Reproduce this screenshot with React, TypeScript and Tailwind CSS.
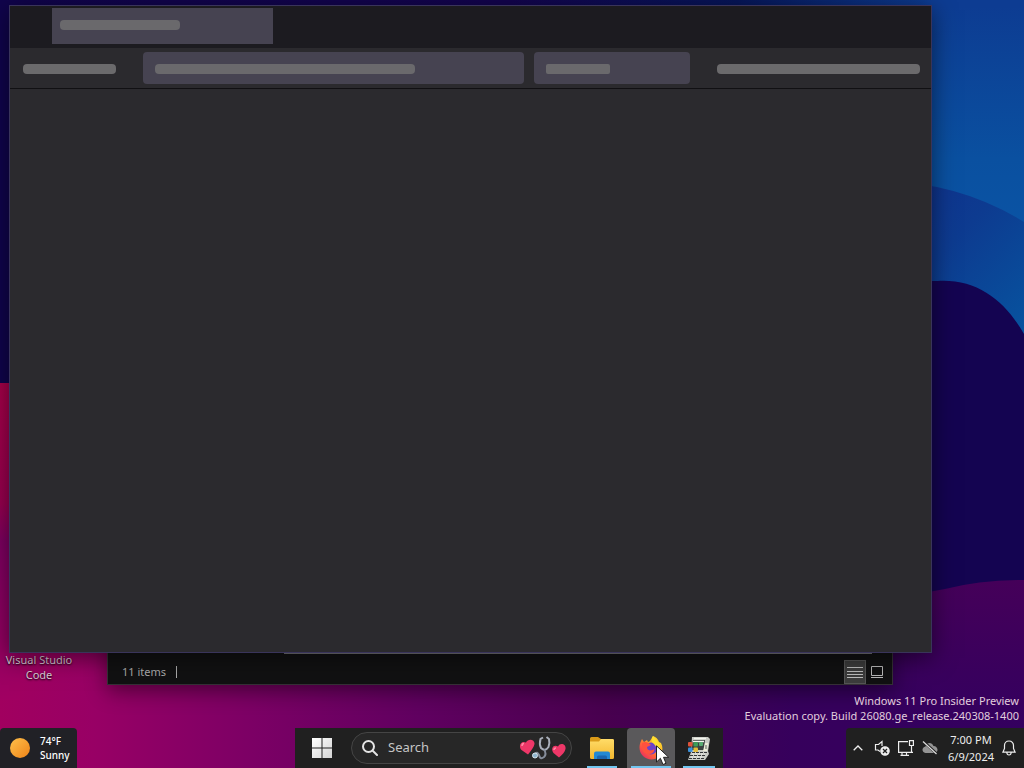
import React from 'react';

function Wallpaper() {
  return (
    <svg className="absolute inset-0 h-full w-full" viewBox="0 0 1024 768" preserveAspectRatio="none" aria-hidden="true">
      <defs>
        <linearGradient id="sky" x1="0" y1="0" x2="1" y2="0">
          <stop offset="0" stopColor="#10044c" />
          <stop offset="0.5" stopColor="#13044f" />
          <stop offset="0.72" stopColor="#06165a" />
          <stop offset="0.91" stopColor="#0d3c92" />
          <stop offset="1" stopColor="#0d3c92" />
        </linearGradient>
        <linearGradient id="skyRight" x1="0" y1="0" x2="0" y2="1">
          <stop offset="0" stopColor="#0d3c92" />
          <stop offset="0.45" stopColor="#0a50a0" />
          <stop offset="1" stopColor="#0a59ab" />
        </linearGradient>
        <linearGradient id="wave" x1="0" y1="0" x2="0.8" y2="1">
          <stop offset="0" stopColor="#102f8b" />
          <stop offset="0.45" stopColor="#0d3b90" />
          <stop offset="1" stopColor="#07539f" />
        </linearGradient>
        <linearGradient id="ground" x1="0" y1="0" x2="1" y2="0">
          <stop offset="0" stopColor="#a1005f" />
          <stop offset="0.1" stopColor="#980065" />
          <stop offset="0.27" stopColor="#7c0065" />
          <stop offset="0.45" stopColor="#600060" />
          <stop offset="0.65" stopColor="#48004f" />
          <stop offset="0.85" stopColor="#36005c" />
          <stop offset="1" stopColor="#36005f" />
        </linearGradient>
        <linearGradient id="hill" x1="0" y1="0" x2="0" y2="1">
          <stop offset="0" stopColor="#450059" />
          <stop offset="0.5" stopColor="#39005d" />
          <stop offset="1" stopColor="#300060" />
        </linearGradient>
        <linearGradient id="edge" x1="0" y1="0" x2="0" y2="1">
          <stop offset="0" stopColor="#a8004a" />
          <stop offset="0.38" stopColor="#990050" />
          <stop offset="0.5" stopColor="#7e0062" />
          <stop offset="1" stopColor="#a10062" />
        </linearGradient>
      </defs>
      <rect width="1024" height="768" fill="url(#sky)" />
      <rect x="932" y="6" width="92" height="340" fill="url(#skyRight)" />
      <path d="M880 181 Q960 182 1024 222 V360 H880Z" fill="url(#wave)" />
      <path d="M880 281 H938 C978 279 1005 301 1024 334 V620 H880Z" fill="#140451" />
      <path d="M0 383 H20 V610 H932 V768 H0Z" fill="url(#ground)" />
      <path d="M0 383 H20 V700 H0Z" fill="url(#edge)" />
      <path d="M860 600 Q905 597 945 589 Q980 580 1024 580 V768 H860Z" fill="url(#hill)" />
    </svg>
  );
}

function FileExplorer() {
  return (
    <section
      aria-label="File Explorer"
      className="absolute top-[120px] right-[131px] bottom-[83px] left-[107px] flex flex-col border border-[#353036] bg-[#111112] shadow-[0_6px_20px_rgba(0,0,0,0.45)]"
    >
      <div className="flex-1" />
      <div className="mr-5 ml-44 h-px bg-[#77777c]" />
      <footer className="flex h-[30px] items-center pt-1.5 pr-1 text-[11px] text-[#aaaaaa]">
        <span className="ml-3.5">11 items</span>
        <span className="ml-2.5 h-3 w-px bg-[#aaaaaa]" />
        <button type="button" aria-label="Details view" className="ml-auto flex h-6 w-[22px] items-center justify-center border border-[#555] bg-[#3c3c3c]">
          <svg width="16" height="12" viewBox="0 0 16 12" stroke="#bcbcbc" aria-hidden="true">
            <path d="M0 1.5H16M0 5.5H16M0 8.5H16M0 11.5H16" />
          </svg>
        </button>
        <button type="button" aria-label="Large icons view" className="flex h-6 w-[22px] items-center justify-center">
          <svg width="12" height="12" viewBox="0 0 12 12" fill="none" stroke="#b8b8b8" aria-hidden="true">
            <path d="M.5 .5H11.5V9.5H.5ZM0 11.5H12" />
          </svg>
        </button>
      </footer>
    </section>
  );
}

function BrowserWindow() {
  return (
    <section
      aria-label="Firefox"
      aria-busy="true"
      className="absolute top-[5px] right-[92px] bottom-[115px] left-[9px] flex flex-col border border-[#39345a] bg-[#2b2a2e] shadow-[0_5px_22px_rgba(0,0,0,0.5)]"
    >
      <div className="flex h-[42px] shrink-0 bg-[#1c1b20] pt-0.5 pb-1 pl-[42px]">
        <div className="flex w-[221px] items-center bg-[#464351] px-2 pb-0.5">
          <div className="h-2.5 w-[120px] rounded bg-[#6a696c]" />
        </div>
      </div>
      <div className="flex h-[41px] shrink-0 items-center border-b border-[#111013] bg-[#2b2a2e] pr-[11px] pl-[13px]">
        <div className="flex h-8 items-center pt-0.5">
          <div className="h-2.5 w-[93px] rounded bg-[#6b6a6c]" />
        </div>
        <div className="ml-[27px] flex h-8 flex-1 items-center rounded bg-[#464351] px-3 pt-0.5">
          <div className="h-2.5 w-[260px] rounded bg-[#6a696c]" />
        </div>
        <div className="ml-2.5 flex h-8 w-[156px] items-center rounded bg-[#464351] px-3 pt-0.5">
          <div className="h-2.5 w-16 rounded-xs bg-[#6a696c]" />
        </div>
        <div className="ml-[27px] flex h-8 items-center pt-0.5">
          <div className="h-2.5 w-[203px] rounded bg-[#6b6a6c]" />
        </div>
      </div>
      <div className="flex-1" />
    </section>
  );
}

function HealthDoodle() {
  return (
    <svg width="48" height="26" viewBox="0 0 48 26" fill="none" aria-hidden="true">
      <path d="M9 19.500 2.500 15C-1 11 2 5 7 7.500 9 3 16 4 15.500 9 15 12 12 16 9 19.500Z" fill="#ee3768" />
      <path d="M3 11Q3 8.500 5 8.500" stroke="#ff8aa5" strokeWidth="1.500" />
      <path d="M40 22.500 34.500 18C31 13 35 9 39 11.500 41 7 47.500 9 46.500 14 46 17 43 20 40 22.500Z" fill="#ee3768" />
      <path d="M35 15Q35 13 37 13" stroke="#ff8aa5" strokeWidth="1.500" />
      <path d="M24 2.500 21.500 4Q20 9 22 13 26 17 29.500 12 31 8 30 4L27.500 2" stroke="#a9afba" strokeWidth="2" />
      <path d="M25 14.500 Q28 19 25 22 21 25 20 20 18 16 16 19" stroke="#858d9b" strokeWidth="2" />
      <circle cx="16" cy="20.500" r="2.500" fill="#8fb5ce" stroke="#d8e5ec" />
    </svg>
  );
}

function StartIcon() {
  return (
    <svg width="20" height="20" viewBox="0 0 20 20" aria-hidden="true">
      <defs>
        <linearGradient id="pane" x1="0" y1="0" x2="1" y2="1">
          <stop stopColor="#ffffff" />
          <stop offset="1" stopColor="#d4d4d4" />
        </linearGradient>
      </defs>
      <path d="M0 0H9.500V9.500H0ZM10.500 0H20V9.500H10.500ZM0 10.500H9.500V20H0ZM10.500 10.500H20V20H10.500Z" fill="url(#pane)" />
    </svg>
  );
}

function FolderIcon() {
  return (
    <svg width="24" height="22" viewBox="0 0 24 22" aria-hidden="true">
      <defs>
        <linearGradient id="folder" x1="0" y1="0" x2="0" y2="1">
          <stop stopColor="#ffdc68" />
          <stop offset="1" stopColor="#f3b72f" />
        </linearGradient>
      </defs>
      <path d="M0 1.500Q0 0 1.500 0H8L11 2H22.500Q24 2 24 3.500V12H0Z" fill="#d99a19" />
      <path d="M0 4.500H9L11 2H22.500Q24 2 24 3.500V20.500Q24 22 22.500 22H1.500Q0 22 0 20.500Z" fill="url(#folder)" />
      <path d="M4 22V16.500Q4 14.500 6 14.500H18Q20 14.500 20 16.500V22Z" fill="#2389d4" />
      <path d="M7 22V20Q7 18.500 8.500 18.500H15.500Q17 18.500 17 20V22Z" fill="#1a65b0" />
    </svg>
  );
}

function FirefoxIcon() {
  return (
    <svg width="24" height="24" viewBox="0 0 24 24" aria-hidden="true">
      <defs>
        <linearGradient id="fox" x1="1" y1="0" x2="0.1" y2="1">
          <stop stopColor="#fff13d" />
          <stop offset="0.35" stopColor="#ffbd26" />
          <stop offset="0.65" stopColor="#ff613b" />
          <stop offset="1" stopColor="#e52267" />
        </linearGradient>
      </defs>
      <path d="M14 0C17 1 19 3 20 6L22 7C24 11 24 16 21 20 17 24 9 25 4 20-1 15 0 8 3 3L5 6 8 4 9 6C11 6 12 3 14 0Z" fill="url(#fox)" />
      <circle cx="12" cy="12.500" r="6" fill="#6d42c8" />
      <path d="M3 7Q8 4 12 9L8 11Q8 14 11 14.500 14 14 15.500 13 15 18 10 18 4 18 3 12Z" fill="#ff513e" />
      <path d="M14 0Q11 5 15 8 19 12 18 18 23 13 20 7Q17 4 14 0Z" fill="#ffdf30" />
    </svg>
  );
}

function RegistryIcon() {
  return (
    <svg width="24" height="24" viewBox="0 0 24 24" aria-hidden="true">
      <path d="M5 1H21L23 3 21 15 22 18 18 24H1L4 16Z" fill="#c9cbc5" />
      <path d="M6 4H18L17 14H4Z" fill="#3c4241" />
      <path d="M7 2.500H19M6 5.500H17" stroke="#f4f4ee" strokeWidth="1.500" />
      <path d="M18 7H21L20 15H16Z" fill="#eeeeda" />
      <rect x="1" y="6" width="4.500" height="4.500" rx="1" fill="#df5239" />
      <rect x="6.500" y="6" width="4.500" height="4.500" rx="1" fill="#3c9c58" />
      <rect x="12" y="6" width="4" height="4" rx="1" fill="#58ab72" />
      <rect x="1" y="11.500" width="4.500" height="4.500" rx="1" fill="#3b91d9" />
      <rect x="6.500" y="11.500" width="4.500" height="4.500" rx="1" fill="#e4bd38" />
      <path d="M5 16.500H20M3 19.500H18M2 22.500H17" stroke="#333638" strokeDasharray="3 1" />
      <path d="M5 18H18M4 21H16" stroke="#f2f2ee" strokeDasharray="2 1" />
      <path d="M18 10H20M18 12H20" stroke="#555d5b" />
    </svg>
  );
}

function SystemTray() {
  return (
    <div className="flex items-center rounded-tl bg-[#202020] pr-2 pl-1.5 text-[#eeeeee]">
      <button type="button" aria-label="Show hidden icons" className="flex h-10 w-3 items-center justify-center">
        <svg width="10" height="6" viewBox="0 0 10 6" fill="none" stroke="currentColor" strokeWidth="1.3" aria-hidden="true"><path d="m.7 5.300L5 1 9.300 5.300" /></svg>
      </button>
      <button type="button" aria-label="Volume muted" className="ml-2.5 flex h-10 w-4 items-center justify-center">
        <svg width="16" height="16" viewBox="0 0 16 16" fill="none" stroke="currentColor" strokeWidth="1.2" aria-hidden="true">
          <path d="M8 6V1.500L4.500 4.500H1.500V10H4L6 11.500" />
          <circle cx="11" cy="11" r="4.200" fill="#eeeeee" />
          <path d="m9 9 4 4m0-4-4 4" stroke="#202020" strokeWidth="1.3" />
        </svg>
      </button>
      <button type="button" aria-label="Network" className="ml-2 flex h-10 w-4 items-center justify-center">
        <svg width="16" height="16" viewBox="0 0 16 16" fill="none" stroke="currentColor" strokeWidth="1.2" aria-hidden="true">
          <path d="M10 1.600H.6V12.400H15M4 12.500V15M2.500 15.300H11M8.500 12.500V15" />
          <path d="M11.500 .6H15.400V5.500H11.500ZM13.500 5.500V12.500" />
        </svg>
      </button>
      <button type="button" aria-label="OneDrive not signed in" className="ml-2 flex h-10 w-4 items-center justify-center">
        <svg width="16" height="14" viewBox="0 0 16 14" aria-hidden="true">
          <path d="M3.500 12C-1 11 0 6 3.500 5.500 4.500 1 10 1 11.500 5 16 5 17 11 13 12Z" fill="#949494" />
          <path d="m2 1 13 12" stroke="#202020" strokeWidth="2.500" />
          <path d="m1 .5 13.500 12.500" stroke="#dddddd" strokeWidth="1.2" />
        </svg>
      </button>
      <button type="button" className="ml-2.5 h-10 w-[46px] text-[11px] leading-[17px] whitespace-nowrap">
        <time className="flex flex-col items-center"><span>7:00 PM</span><span>6/9/2024</span></time>
      </button>
      <button type="button" aria-label="Notifications" className="ml-2 flex h-10 w-3.5 items-center justify-center">
        <svg width="14" height="16" viewBox="0 0 14 16" fill="none" stroke="currentColor" strokeWidth="1.2" aria-hidden="true">
          <path d="M7 1C4.200 1 2.500 3 2.500 5.500V8.500L.9 12.200H13.100L11.500 8.500V5.500C11.500 3 9.800 1 7 1ZM4.800 12.500Q5 15 7 15T9.200 12.500" />
        </svg>
      </button>
    </div>
  );
}

function Taskbar() {
  return (
    <nav aria-label="Taskbar" className="relative z-10 mt-auto grid h-10 w-full grid-cols-[1fr_auto_1fr]">
      <button type="button" className="flex w-[77px] items-center gap-2.5 rounded-t bg-[#212126] pl-2.5 text-left text-[10px] leading-[14px] font-medium text-white">
        <svg width="20" height="20" viewBox="0 0 20 20" aria-hidden="true">
          <defs><linearGradient id="sun" x1="0" y1="0" x2="1" y2="1"><stop stopColor="#ffc04b" /><stop offset="1" stopColor="#ee8318" /></linearGradient></defs>
          <circle cx="10" cy="10" r="10" fill="url(#sun)" />
        </svg>
        <span className="flex flex-col"><span>74°F</span><span>Sunny</span></span>
      </button>
      <div className="mr-1.5 flex w-[428px] items-center bg-[#202020]">
        <button type="button" aria-label="Start" className="ml-[17px] flex size-5 items-center justify-center"><StartIcon /></button>
        <label className="ml-[19px] flex h-8 w-[221px] items-center rounded-full border border-[#454545] bg-[#272727] pr-1 pl-2.5">
          <svg width="16" height="16" viewBox="0 0 16 16" fill="none" stroke="#e5e5e5" strokeWidth="2" strokeLinecap="round" aria-hidden="true"><circle cx="6.500" cy="6.500" r="5.500" /><path d="m11 11 4 4" /></svg>
          <input type="text" aria-label="Search" placeholder="Search" className="ml-2.5 w-full min-w-0 flex-1 bg-transparent text-[13px] outline-none placeholder:text-[#c5c5c5]" />
          <HealthDoodle />
        </label>
        <button type="button" aria-label="File Explorer" className="ml-[6px] flex h-10 w-12 flex-col items-center pt-[9px]">
          <FolderIcon /><span className="mt-auto h-0.5 w-[30px] bg-[#72c6f0]" />
        </button>
        <button type="button" aria-label="Firefox" className="ml-px flex h-10 w-12 flex-col items-center rounded-t bg-[#5a595b] pt-2">
          <FirefoxIcon /><span className="mt-auto h-0.5 w-10 bg-[#72c6f0]" />
        </button>
        <button type="button" aria-label="Registry tool" className="flex h-10 w-12 flex-col items-center pt-2">
          <RegistryIcon /><span className="mt-auto h-0.5 w-8 bg-[#72c6f0]" />
        </button>
      </div>
      <div className="flex justify-end"><SystemTray /></div>
    </nav>
  );
}

export default function App() {
  return (
    <main className="relative flex h-screen flex-col overflow-hidden bg-[#10044c] font-['Noto_Sans','Open_Sans',sans-serif]">
      <Wallpaper />
      <a href="#vscode" className="absolute bottom-[86px] left-0 w-[78px] text-center text-[11px] leading-[15px] text-[#d8c7d4] [text-shadow:0_1px_2px_#000]">Visual Studio Code</a>
      <FileExplorer />
      <BrowserWindow />
      <p className="absolute right-[5px] bottom-[45px] text-right text-[11px] leading-[15px] whitespace-nowrap text-[#e1cedd]">
        Windows 11 Pro Insider Preview<br />Evaluation copy. Build 26080.ge_release.240308-1400
      </p>
      <Taskbar />
      <svg className="absolute bottom-[2px] left-[656px] z-20" width="14" height="21" viewBox="0 0 14 21" aria-hidden="true">
        <path d="M.5 .8V17L4.400 13.300 7 19.500 10 18.300 7.500 12.300H12.700Z" fill="#fff" stroke="#222" />
      </svg>
    </main>
  );
}
